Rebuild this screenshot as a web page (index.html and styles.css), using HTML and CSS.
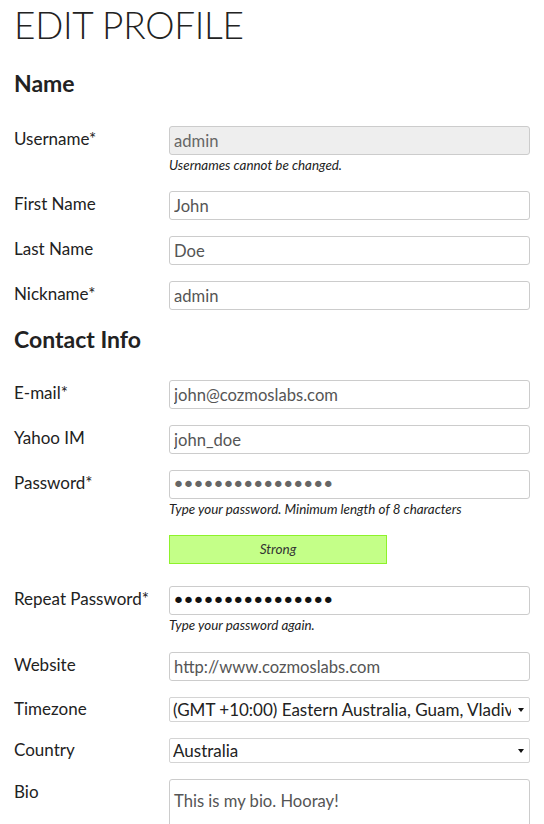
FILE: index.html
```html
<!DOCTYPE html>
<html lang="en">
<head>
<meta charset="utf-8">
<title>Edit Profile</title>
<link rel="stylesheet" href="styles.css">
</head>
<body>
<form class="profile">
  <h1 class="page-title">EDIT PROFILE</h1>

  <h2 class="section-title first">Name</h2>
  <div class="row">
    <label class="label" for="username">Username*</label>
    <div class="field">
      <input class="input" id="username" type="text" value="admin" disabled>
      <p class="help">Usernames cannot be changed.</p>
    </div>
  </div>
  <div class="row">
    <label class="label" for="first">First Name</label>
    <div class="field"><input class="input" id="first" type="text" value="John"></div>
  </div>
  <div class="row">
    <label class="label" for="last">Last Name</label>
    <div class="field"><input class="input" id="last" type="text" value="Doe"></div>
  </div>
  <div class="row">
    <label class="label" for="nick">Nickname*</label>
    <div class="field"><input class="input" id="nick" type="text" value="admin"></div>
  </div>

  <h2 class="section-title">Contact Info</h2>
  <div class="row">
    <label class="label" for="email">E-mail*</label>
    <div class="field"><input class="input" id="email" type="text" value="john@cozmoslabs.com"></div>
  </div>
  <div class="row">
    <label class="label" for="yim">Yahoo IM</label>
    <div class="field"><input class="input" id="yim" type="text" value="john_doe"></div>
  </div>
  <div class="row">
    <label class="label" for="pass">Password*</label>
    <div class="field">
      <input class="input pass" id="pass" type="password" value="abcdefghijklmnop">
      <p class="help">Type your password. Minimum length of 8 characters</p>
    </div>
  </div>
  <div class="row strength-row">
    <span class="label"></span>
    <div class="field"><div class="strength">Strong</div></div>
  </div>
  <div class="row">
    <label class="label" for="pass2">Repeat Password*</label>
    <div class="field">
      <input class="input pass pass-dark" id="pass2" type="password" value="abcdefghijklmnop">
      <p class="help help-gap">Type your password again.</p>
    </div>
  </div>
  <div class="row">
    <label class="label" for="web">Website</label>
    <div class="field"><input class="input" id="web" type="text" value="http://www.cozmoslabs.com"></div>
  </div>
  <div class="row">
    <label class="label label-select" for="tz">Timezone</label>
    <div class="field">
      <div class="select-wrap">
        <select class="select" id="tz">
          <option>(GMT +10:00) Eastern Australia, Guam, Vladivostok</option>
        </select>
      </div>
    </div>
  </div>
  <div class="row">
    <label class="label label-select" for="country">Country</label>
    <div class="field">
      <div class="select-wrap">
        <select class="select" id="country">
          <option>Australia</option>
        </select>
      </div>
    </div>
  </div>
  <div class="row">
    <label class="label" for="bio">Bio</label>
    <div class="field"><textarea class="textarea" id="bio">This is my bio. Hooray!</textarea></div>
  </div>
</form>
</body>
</html>
```
FILE: styles.css
```css
html, body {
  margin: 0;
  padding: 0;
  background: #ffffff;
}
body {
  font-family: Lato, "Open Sans", sans-serif;
  color: #222222;
  overflow: hidden;
}
.profile {
  padding: 0 14px;
}
.page-title {
  margin: 2px 0 0;
  font-size: 37px;
  line-height: 46px;
  font-weight: 300;
  color: #222222;
  letter-spacing: -0.3px;
}
.section-title {
  margin: 0 0 28px;
  font-size: 23px;
  line-height: 26px;
  font-weight: 700;
  color: #222222;
}
.section-title.first {
  margin: 22px 0 30px;
}
.row {
  display: grid;
  grid-template-columns: 155px 1fr;
  margin-bottom: 16px;
}
.label {
  font-size: 17px;
  line-height: 20px;
  padding-top: 3px;
  color: #222222;
}
.label-select {
  padding-top: 2px;
}
.field {
  min-width: 0;
}
.input {
  display: block;
  box-sizing: border-box;
  width: 100%;
  height: 29px;
  margin: 0;
  padding: 0 4px;
  border: 1px solid #cccccc;
  border-radius: 3px;
  background: #ffffff;
  font-family: Lato, sans-serif;
  font-size: 16.6px;
  color: #555555;
  outline: none;
}
.input:disabled {
  background: #eeeeee;
  color: #666666;
}
.pass {
  color: #666666;
  font-family: "DejaVu Sans", sans-serif;
  font-size: 22px;
  letter-spacing: -3px;
  padding-left: 2px;
}
.pass-dark {
  color: #111111;
}
.help {
  margin: 2px 0 2px;
  font-size: 13.4px;
  line-height: 16px;
  font-style: italic;
  color: #222222;
}
.help-gap {
  margin-bottom: 3px;
}
.strength-row {
  margin-bottom: 22px;
}
.strength {
  box-sizing: border-box;
  width: 218px;
  height: 29px;
  border: 1px solid #8ef22b;
  background: #c4ff88;
  font-size: 13.6px;
  font-style: italic;
  line-height: 27px;
  text-align: center;
  color: #333333;
}
.select-wrap {
  position: relative;
}
.select-wrap::after {
  content: "";
  position: absolute;
  right: 6px;
  top: 11px;
  border-left: 3.5px solid transparent;
  border-right: 3.5px solid transparent;
  border-top: 4px solid #111111;
  pointer-events: none;
}
.select {
  display: block;
  box-sizing: border-box;
  width: 100%;
  height: 25px;
  margin: 0;
  padding: 0 18px 0 3px;
  border: 1px solid #d4d4d4;
  border-radius: 2px;
  background: #ffffff;
  font-family: Lato, sans-serif;
  font-size: 17px;
  color: #222222;
  -webkit-appearance: none;
  appearance: none;
  outline: none;
}
.textarea {
  display: block;
  box-sizing: border-box;
  width: 100%;
  height: 90px;
  margin: 0;
  padding: 11px 4px 4px;
  border: 1px solid #cccccc;
  border-radius: 3px;
  font-family: Lato, sans-serif;
  font-size: 16.6px;
  line-height: 20px;
  color: #555555;
  resize: none;
  outline: none;
}
```
